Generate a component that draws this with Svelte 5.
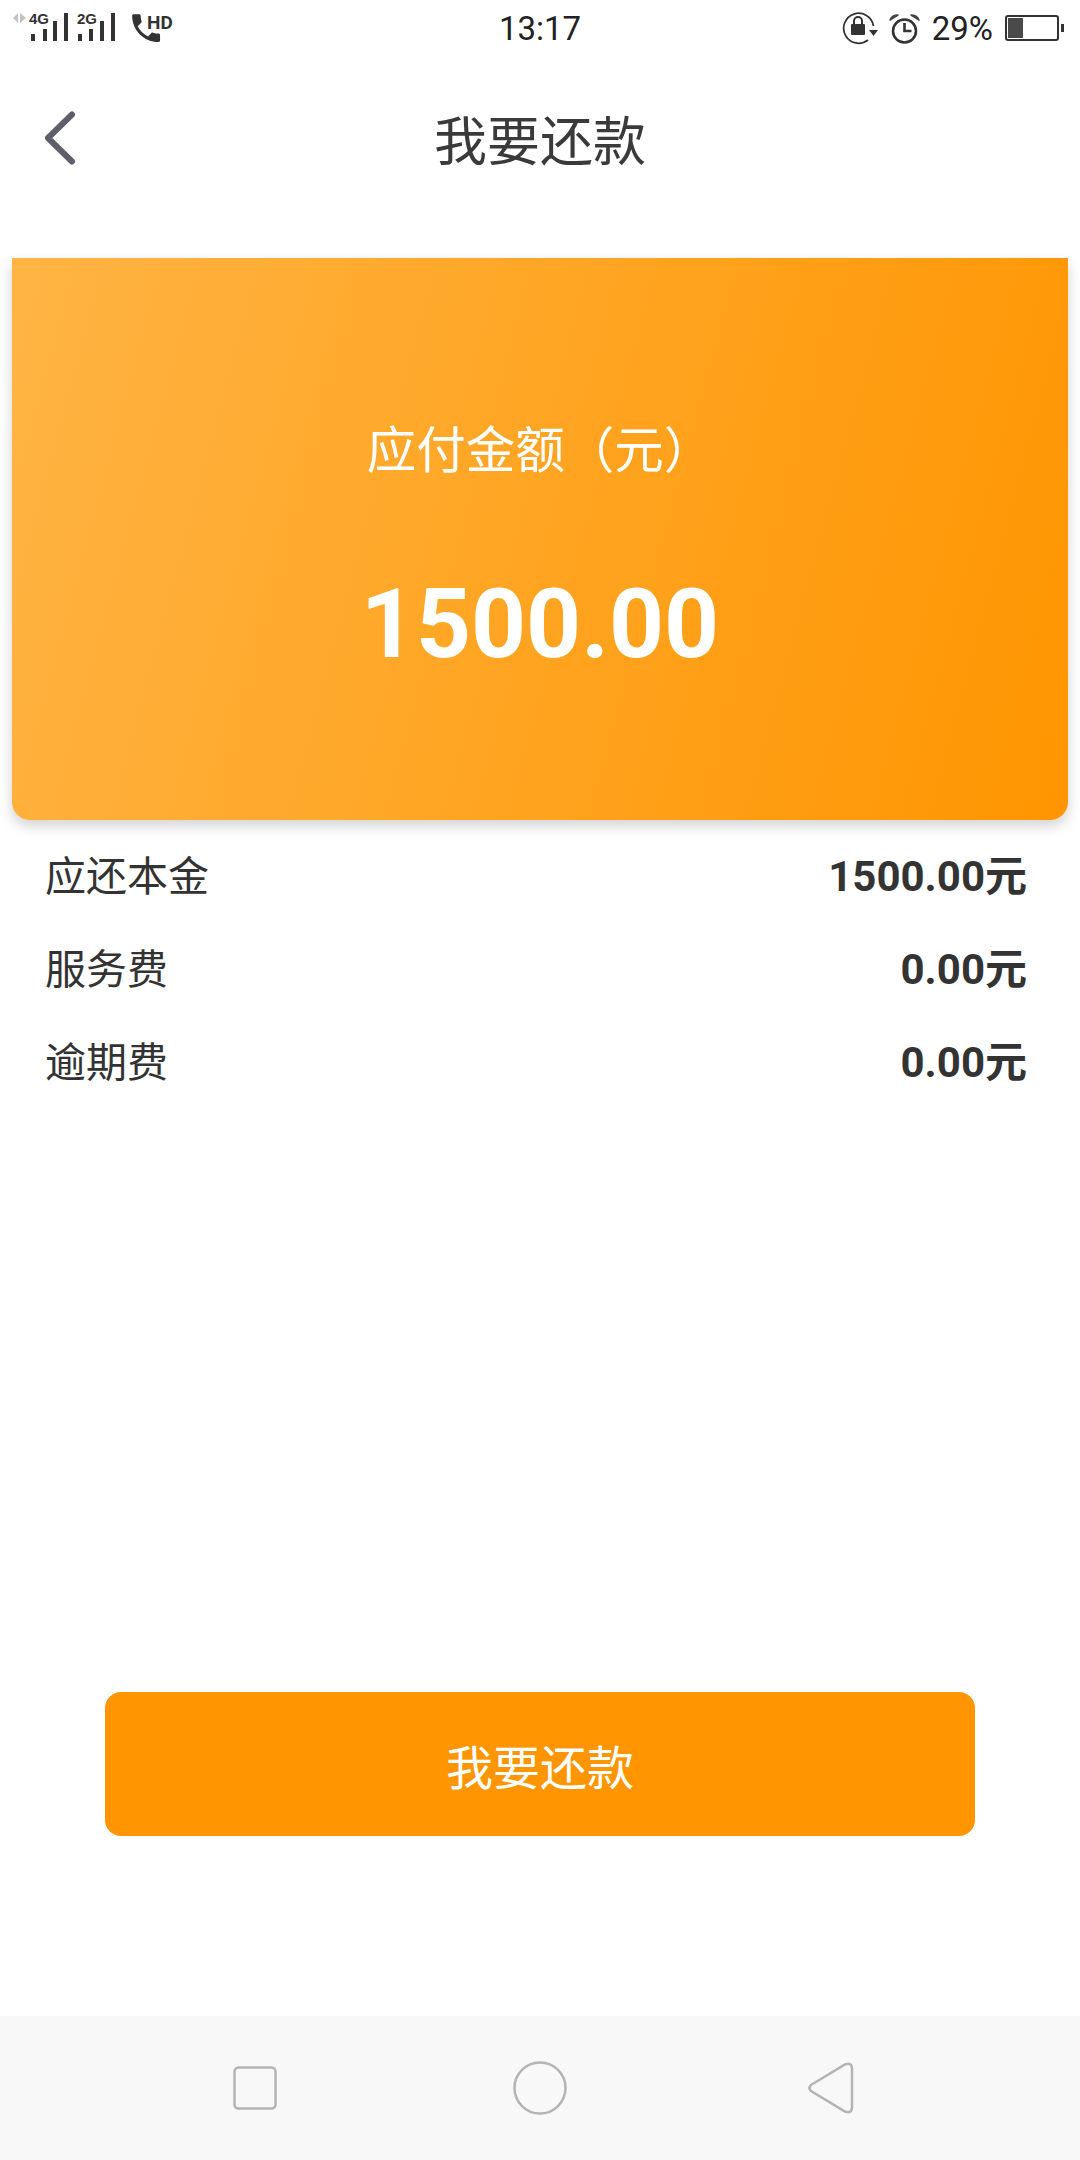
<script>
	const rows = [
		{ label: "应还本金", value: "1500.00元" },
		{ label: "服务费", value: "0.00元" },
		{ label: "逾期费", value: "0.00元" },
	];
</script>

<main>
	<div class="status">
		<svg class="status-left" width="190" height="48" viewBox="0 0 190 48">
			<path d="M18 13 L13 18 L18 23Z M20 13 L26 18 L20 23Z" fill="#c4c4c4" />
			<text x="29" y="24" class="tiny">4G</text>
			<g fill="#333">
				<rect x="31" y="34" width="4" height="7" />
				<rect x="43" y="29" width="4" height="12" />
				<rect x="53" y="21" width="4" height="20" />
				<rect x="64" y="13" width="4" height="28" />
			</g>
			<text x="77" y="24" class="tiny">2G</text>
			<g fill="#333">
				<rect x="78" y="34" width="4" height="7" />
				<rect x="89" y="29" width="4" height="12" />
				<rect x="100" y="21" width="4" height="20" />
				<rect x="111" y="13" width="4" height="28" />
			</g>
			<path transform="translate(127.500 9.500) scale(1.550)" d="M6.620 10.790c1.440 2.830 3.760 5.140 6.590 6.590l2.200-2.200c.27-.27.67-.36 1.020-.24 1.120.37 2.330.57 3.570.57.55 0 1 .45 1 1V20c0 .55-.45 1-1 1-9.390 0-17-7.610-17-17 0-.55.45-1 1-1h3.500c.55 0 1 .45 1 1 0 1.250.2 2.450.57 3.570.11.35.03.74-.25 1.020l-2.200 2.200z" fill="#333" />
			<text x="147" y="29" class="hd">HD</text>
		</svg>
		<div class="time">13:17</div>
		<div class="status-right">
			<svg width="38" height="34" viewBox="0 0 38 34">
				<path d="M32.500 15 A15 15 0 1 0 27 29" fill="none" stroke="#333" stroke-width="1.800" />
				<path d="M28 19 h9 l-4.500 6z" fill="#333" />
				<rect x="10" y="13" width="14" height="11" rx="1" fill="#333" />
				<path d="M13 13 v-3 a4 4 0 0 1 8 0 v3" fill="none" stroke="#333" stroke-width="2" />
			</svg>
			<svg class="alarm" width="32" height="32" viewBox="0 0 32 32">
				<circle cx="15.500" cy="18" r="11.500" fill="none" stroke="#333" stroke-width="2.600" />
				<path d="M15.500 10 v8 h7" fill="none" stroke="#333" stroke-width="2.600" />
				<path d="M1 7 q2 -5 8 -5 z M30 7 q-2 -5 -8 -5 z" fill="#444" stroke="#444" stroke-width="1.500" stroke-linejoin="round" />
			</svg>
			<span class="pct">29%</span>
			<div class="battery">
				<div class="battery-fill"></div>
			</div>
			<div class="battery-tip"></div>
		</div>
	</div>

	<header>
		<svg class="back" width="32" height="56" viewBox="0 0 32 56">
			<path d="M28 5.500 L4 29 L28 52.500" fill="none" stroke="#5f5f6b" stroke-width="6" stroke-linecap="round" stroke-linejoin="round" />
		</svg>
		<h1>我要还款</h1>
	</header>

	<section class="card">
		<div class="card-label">应付金额（元）</div>
		<div class="card-amount">1500.00</div>
	</section>

	<ul class="rows">
		{#each rows as r}
			<li>
				<span>{r.label}</span>
				<b>{r.value}</b>
			</li>
		{/each}
	</ul>

	<div class="action">
		<button>我要还款</button>
	</div>

	<nav>
		<svg width="44" height="44" viewBox="0 0 44 44">
			<rect x="1.500" y="1.500" width="41" height="41" rx="4" fill="none" stroke="#b4b4b4" stroke-width="2.500" />
		</svg>
		<svg class="home" width="54" height="54" viewBox="0 0 54 54">
			<circle cx="27" cy="27" r="25.500" fill="none" stroke="#b4b4b4" stroke-width="2.500" />
		</svg>
		<svg width="46" height="52" viewBox="0 0 46 52">
			<path d="M3 23 L37 2.500 Q44 0 44 7 V45 Q44 52 37 49.500 L3 29 Q0 26 3 23Z" fill="none" stroke="#b4b4b4" stroke-width="2.500" />
		</svg>
	</nav>
</main>

<style>
	:global(body) {
		margin: 0;
		background: #fff;
	}

	main {
		width: 1080px;
		height: 2160px;
		display: flex;
		flex-direction: column;
		font-family: Roboto, "Noto Sans CJK SC", sans-serif;
		color: #333;
		overflow: hidden;
	}

	.status {
		height: 54px;
		display: grid;
		grid-template-columns: 1fr auto 1fr;
		align-items: center;
	}

	.status-left {
		display: block;
		align-self: start;
	}

	.tiny {
		font: 700 15px "Liberation Sans", sans-serif;
		fill: #333;
	}

	.hd {
		font: 700 19px Roboto, sans-serif;
		fill: #333;
	}

	.time {
		font-size: 33px;
		color: #222;
		line-height: 54px;
		padding-top: 2px;
	}

	.status-right {
		display: flex;
		align-items: center;
		justify-content: flex-end;
		padding-right: 16px;
	}

	.alarm {
		margin-left: 10px;
		margin-top: 2px;
	}

	.pct {
		font-size: 33px;
		color: #222;
		margin-left: 11px;
		margin-right: 12px;
	}

	.battery {
		width: 54px;
		height: 26px;
		box-sizing: border-box;
		border: 2px solid #333;
		border-radius: 3px;
		padding: 1px;
		display: flex;
	}

	.battery-fill {
		width: 15px;
		background: #4a4a4a;
	}

	.battery-tip {
		width: 3px;
		height: 8px;
		background: #333;
		margin-left: 2px;
	}

	header {
		height: 112px;
		position: relative;
		display: flex;
		align-items: center;
		justify-content: center;
	}

	.back {
		position: absolute;
		left: 44px;
		top: 55px;
	}

	h1 {
		margin: 0;
		font-size: 53px;
		font-weight: 400;
		color: #3a3a3a;
		position: relative;
		top: 28px;
	}

	.card {
		margin: 92px 12px 0;
		height: 562px;
		box-sizing: border-box;
		border-radius: 0 0 18px 18px;
		background: linear-gradient(105deg, #ffb444 0%, #ff9500 100%);
		box-shadow: 0 6px 14px rgba(0, 0, 0, 0.18);
		color: #fff;
		display: flex;
		flex-direction: column;
		align-items: center;
		padding-top: 161px;
	}

	.card-label {
		font-size: 49.500px;
		line-height: 64px;
		font-weight: 400;
	}

	.card-amount {
		font-size: 96px;
		font-weight: 700;
		line-height: 112px;
		margin-top: 85px;
	}

	.rows {
		list-style: none;
		margin: 6px 0 0;
		padding: 0 53px 0 45px;
	}

	.rows li {
		height: 93px;
		display: flex;
		align-items: center;
		justify-content: space-between;
		font-size: 41px;
		color: #333;
	}

	.rows b {
		font-size: 42px;
		font-weight: 700;
	}

	.action {
		flex: 1;
		display: flex;
		align-items: flex-start;
		justify-content: center;
		padding-top: 587px;
	}

	button {
		width: 870px;
		height: 144px;
		border: none;
		border-radius: 16px;
		background: #ff9500;
		color: #fff;
		font: 400 47px Roboto, "Noto Sans CJK SC", sans-serif;
	}

	nav {
		height: 144px;
		flex: none;
		background: #f8f8f8;
		display: flex;
		align-items: center;
		padding: 0 0 0 233px;
	}

	.home {
		margin: 0 241px 0 236px;
	}
</style>
